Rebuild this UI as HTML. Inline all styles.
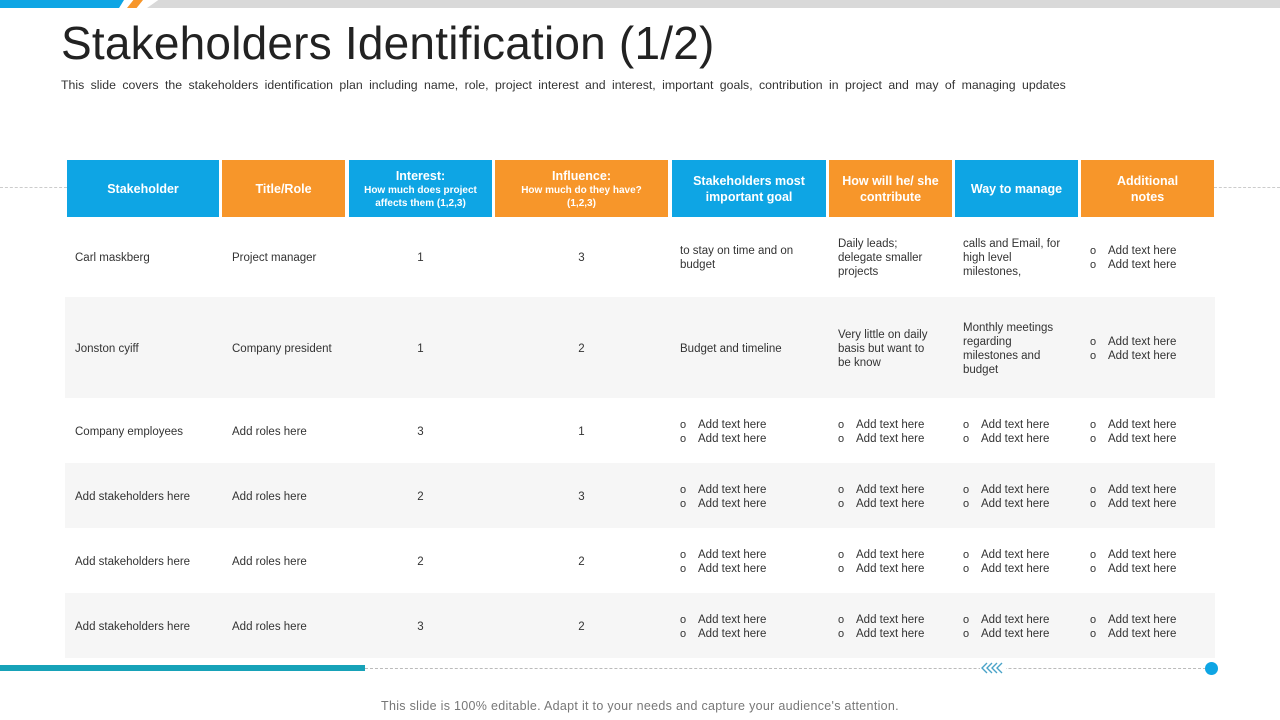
<!DOCTYPE html>
<html><head><meta charset="utf-8"><style>
*{margin:0;padding:0;box-sizing:border-box}
body{width:1280px;height:720px;position:relative;background:#fff;font-family:"Liberation Sans",sans-serif;overflow:hidden;color:#333}
.a{position:absolute}
.h{position:absolute;top:160px;height:57px;color:#fff;font-weight:bold;font-size:12.5px;display:flex;flex-direction:column;align-items:center;justify-content:center;text-align:center;line-height:16px}
.h small{font-size:10px;line-height:13px;display:block}
.b{background:#0ea5e4}.o{background:#f7962a}
.row{position:absolute;left:65px;width:1150px}
.g{background:#f6f6f6}
.c{position:absolute;font-size:11.5px;line-height:14px;color:#333;top:50%;transform:translateY(calc(-50% + 1px))}
.ct{text-align:center}
.bl{padding-left:18px}
.bl div{position:relative;white-space:nowrap}
.bl div:before{content:"o";position:absolute;left:-18px;font-size:11px}
</style></head><body>
<div class="a" style="left:0;top:0;width:124px;height:8px;background:#0ea5e4;clip-path:polygon(0 0,100% 0,96% 100%,0 100%)"></div>
<div class="a" style="left:127px;top:0;width:16px;height:8px;background:#f7962a;clip-path:polygon(40% 0,100% 0,60% 100%,0 100%)"></div>
<div class="a" style="left:147px;top:0;width:1133px;height:8px;background:#d9d9d9;clip-path:polygon(1% 0,100% 0,100% 100%,0 100%)"></div>
<div class="a" style="left:61px;top:16px;font-size:46px;color:#222;letter-spacing:0.2px">Stakeholders Identification (1/2)</div>
<div class="a" style="left:61px;top:78px;font-size:12.3px;color:#333;word-spacing:3px">This slide covers the stakeholders identification plan including name, role, project interest and interest, important goals, contribution in project and may of managing updates</div>
<div class="a" style="left:0;top:187px;width:67px;border-top:1px dashed #ccc"></div>
<div class="a" style="left:1214px;top:187px;width:66px;border-top:1px dashed #ccc"></div>

<div class="h b" style="left:67px;width:152px">Stakeholder</div>
<div class="h o" style="left:222px;width:123px">Title/Role</div>
<div class="h b" style="left:349px;width:143px">Interest:<small>How much does project<br>affects them (1,2,3)</small></div>
<div class="h o" style="left:495px;width:173px">Influence:<small>How much do they have?<br>(1,2,3)</small></div>
<div class="h b" style="left:672px;width:154px">Stakeholders most<br>important goal</div>
<div class="h o" style="left:829px;width:123px">How will he/ she<br>contribute</div>
<div class="h b" style="left:955px;width:123px">Way to manage</div>
<div class="h o" style="left:1081px;width:133px">Additional<br>notes</div>

<div class="row" style="top:217px;height:80px">
<div class="c" style="left:10px">Carl maskberg</div><div class="c" style="left:167px">Project manager</div>
<div class="c ct" style="left:284px;width:143px">1</div><div class="c ct" style="left:430px;width:173px">3</div>
<div class="c" style="left:615px;width:135px">to stay on time and on budget</div>
<div class="c" style="left:773px;width:105px">Daily leads; delegate smaller projects</div>
<div class="c" style="left:898px;width:108px">calls and Email, for<br>high level<br>milestones,</div>
<div class="c bl" style="left:1025px"><div>Add text here</div><div>Add text here</div></div>
</div>
<div class="row g" style="top:297px;height:101px">
<div class="c" style="left:10px">Jonston cyiff</div><div class="c" style="left:167px">Company president</div>
<div class="c ct" style="left:284px;width:143px">1</div><div class="c ct" style="left:430px;width:173px">2</div>
<div class="c" style="left:615px">Budget and timeline</div>
<div class="c" style="left:773px;width:100px">Very little on daily basis but want to be know</div>
<div class="c" style="left:898px;width:105px">Monthly meetings regarding milestones and budget</div>
<div class="c bl" style="left:1025px"><div>Add text here</div><div>Add text here</div></div>
</div>
<div class="row" style="top:398px;height:65px">
<div class="c" style="left:10px">Company employees</div><div class="c" style="left:167px">Add roles here</div>
<div class="c ct" style="left:284px;width:143px">3</div><div class="c ct" style="left:430px;width:173px">1</div>
<div class="c bl" style="left:615px"><div>Add text here</div><div>Add text here</div></div>
<div class="c bl" style="left:773px"><div>Add text here</div><div>Add text here</div></div>
<div class="c bl" style="left:898px"><div>Add text here</div><div>Add text here</div></div>
<div class="c bl" style="left:1025px"><div>Add text here</div><div>Add text here</div></div>
</div>
<div class="row g" style="top:463px;height:65px">
<div class="c" style="left:10px">Add stakeholders here</div><div class="c" style="left:167px">Add roles here</div>
<div class="c ct" style="left:284px;width:143px">2</div><div class="c ct" style="left:430px;width:173px">3</div>
<div class="c bl" style="left:615px"><div>Add text here</div><div>Add text here</div></div>
<div class="c bl" style="left:773px"><div>Add text here</div><div>Add text here</div></div>
<div class="c bl" style="left:898px"><div>Add text here</div><div>Add text here</div></div>
<div class="c bl" style="left:1025px"><div>Add text here</div><div>Add text here</div></div>
</div>
<div class="row" style="top:528px;height:65px">
<div class="c" style="left:10px">Add stakeholders here</div><div class="c" style="left:167px">Add roles here</div>
<div class="c ct" style="left:284px;width:143px">2</div><div class="c ct" style="left:430px;width:173px">2</div>
<div class="c bl" style="left:615px"><div>Add text here</div><div>Add text here</div></div>
<div class="c bl" style="left:773px"><div>Add text here</div><div>Add text here</div></div>
<div class="c bl" style="left:898px"><div>Add text here</div><div>Add text here</div></div>
<div class="c bl" style="left:1025px"><div>Add text here</div><div>Add text here</div></div>
</div>
<div class="row g" style="top:593px;height:65px">
<div class="c" style="left:10px">Add stakeholders here</div><div class="c" style="left:167px">Add roles here</div>
<div class="c ct" style="left:284px;width:143px">3</div><div class="c ct" style="left:430px;width:173px">2</div>
<div class="c bl" style="left:615px"><div>Add text here</div><div>Add text here</div></div>
<div class="c bl" style="left:773px"><div>Add text here</div><div>Add text here</div></div>
<div class="c bl" style="left:898px"><div>Add text here</div><div>Add text here</div></div>
<div class="c bl" style="left:1025px"><div>Add text here</div><div>Add text here</div></div>
</div>

<div class="a" style="left:0;top:665px;width:365px;height:6px;background:#17a2b8"></div>
<div class="a" style="left:365px;top:668px;width:846px;border-top:1px dashed #bbb"></div>
<svg class="a" style="left:980px;top:662px" width="26" height="12" viewBox="0 0 26 12"><rect width="26" height="12" fill="#fff"/><g fill="none" stroke="#4aa3c8" stroke-width="1.4"><path d="M7 1L2 6L7 11M12 1L7 6L12 11M17 1L12 6L17 11M22 1L17 6L22 11"/></g></svg>
<div class="a" style="left:1205px;top:662px;width:13px;height:13px;border-radius:50%;background:#0ea5e4"></div>
<div class="a" style="left:0;width:1280px;top:699px;text-align:center;font-size:12.5px;color:#777;letter-spacing:0.3px">This slide is 100% editable. Adapt it to your needs and capture your audience's attention.</div>
</body></html>
